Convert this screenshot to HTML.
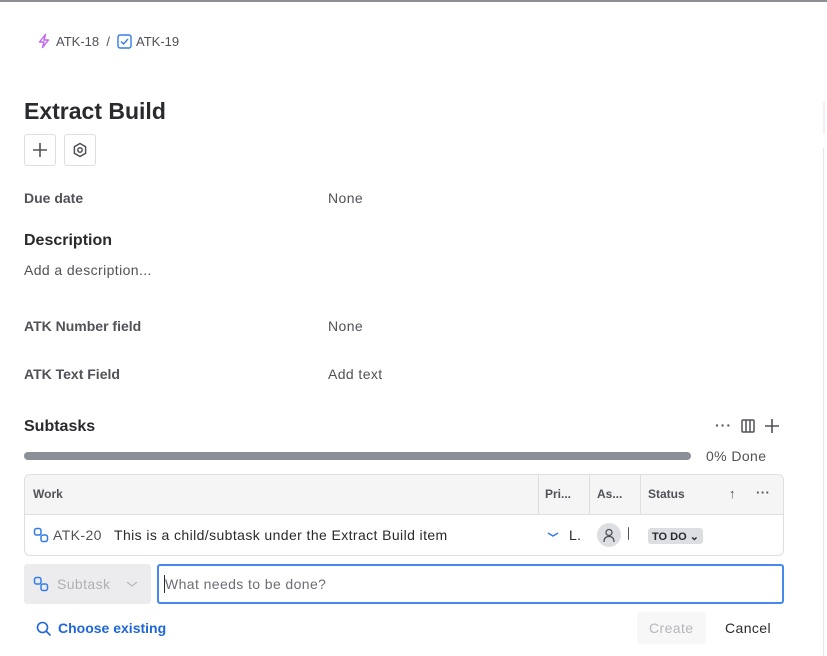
<!DOCTYPE html>
<html><head><meta charset="utf-8"><style>
*{box-sizing:border-box;margin:0;padding:0}
body{width:827px;height:656px;background:#fff;font-family:"Liberation Sans",sans-serif;color:#292a2e;position:relative;overflow:hidden;font-size:14px;letter-spacing:0.4px}
.a{position:absolute;white-space:nowrap}
.lbl{font-weight:bold;color:#505258;letter-spacing:0}
.val{color:#505258}
b,.bold{letter-spacing:0}
</style></head><body>
<div class="a" style="left:0;top:0;width:827px;height:2px;background:#8c8f95"></div>
<div class="a" style="left:823px;top:148px;width:1px;height:508px;background:#e6e7ea"></div>
<div class="a" style="left:823px;top:102px;width:2px;height:32px;background:#f0f1f2"></div>

<svg class="a" style="left:36px;top:33px" width="16" height="16" viewBox="0 0 16 16"><path d="M9.5 1.5L3.5 9h4.5l-1.5 5.5L12.5 7H8z" fill="none" stroke="#bf63f3" stroke-width="1.4" stroke-linejoin="round"/></svg>
<div class="a" style="left:56px;top:34px;font-size:13px;color:#505258;letter-spacing:0">ATK-18 &nbsp;/</div>
<svg class="a" style="left:117px;top:34px" width="15" height="15" viewBox="0 0 15 15"><rect x="1" y="1" width="13" height="13" rx="2" fill="none" stroke="#357de8" stroke-width="1.4"/><path d="M4 7.5l2.5 2.5L11 5" fill="none" stroke="#357de8" stroke-width="1.4"/></svg>
<div class="a" style="left:136px;top:34px;font-size:13px;color:#505258;letter-spacing:0">ATK-19</div>

<div class="a" style="left:24px;top:98px;font-size:23px;font-weight:bold;color:#292a2e;letter-spacing:0">Extract Build</div>
<div class="a" style="left:24px;top:134px;width:32px;height:32px;border:1px solid #dddee1;border-radius:3px"></div>
<svg class="a" style="left:31px;top:141px" width="18" height="18"><path d="M9 2v14M2 9h14" stroke="#505258" stroke-width="1.6"/></svg>
<div class="a" style="left:64px;top:134px;width:32px;height:32px;border:1px solid #dddee1;border-radius:3px"></div>
<svg class="a" style="left:71px;top:141px" width="18" height="18" viewBox="0 0 18 18"><path d="M9 2.5l5.6 3.2v6.6L9 15.5l-5.6-3.2V5.7z" fill="none" stroke="#505258" stroke-width="1.5"/><circle cx="9" cy="9" r="2.2" fill="none" stroke="#505258" stroke-width="1.5"/></svg>

<div class="a lbl" style="left:24px;top:190px">Due date</div>
<div class="a val" style="left:328px;top:190px">None</div>
<div class="a bold" style="left:24px;top:232px;font-size:16px;font-weight:bold">Description</div>
<div class="a val" style="left:24px;top:262px">Add a description...</div>
<div class="a lbl" style="left:24px;top:318px">ATK Number field</div>
<div class="a val" style="left:328px;top:318px">None</div>
<div class="a lbl" style="left:24px;top:366px">ATK Text Field</div>
<div class="a val" style="left:328px;top:366px">Add text</div>

<div class="a bold" style="left:24px;top:418px;font-size:16px;font-weight:bold">Subtasks</div>
<div class="a" style="left:715px;top:417px;font-size:14px;font-weight:bold;color:#505258;letter-spacing:1px">···</div>
<svg class="a" style="left:741px;top:419px" width="14" height="14"><rect x="1" y="1" width="12" height="12" rx="1" fill="none" stroke="#505258" stroke-width="1.5"/><path d="M5 1v12M9 1v12" stroke="#505258" stroke-width="1.5"/></svg>
<svg class="a" style="left:764px;top:418px" width="16" height="16"><path d="M8 1v14M1 8h14" stroke="#505258" stroke-width="1.6"/></svg>
<div class="a" style="left:24px;top:452px;width:667px;height:8px;border-radius:4px;background:#8c8f97"></div>
<div class="a val" style="left:706px;top:448px">0% Done</div>

<div class="a" style="left:24px;top:474px;width:760px;height:82px;border:1px solid #dddee1;border-radius:6px;overflow:hidden">
  <div style="position:absolute;left:0;top:0;width:760px;height:40px;background:#f5f5f6;border-bottom:1px solid #dddee1"></div>
  <div style="position:absolute;left:513px;top:0;width:1px;height:40px;background:#dddee1"></div>
  <div style="position:absolute;left:564px;top:0;width:1px;height:40px;background:#dddee1"></div>
  <div style="position:absolute;left:615px;top:0;width:1px;height:40px;background:#dddee1"></div>
</div>
<div class="a bold" style="left:33px;top:487px;font-size:12px;font-weight:bold;color:#505258">Work</div>
<div class="a bold" style="left:545px;top:487px;font-size:12px;font-weight:bold;color:#505258">Pri...</div>
<div class="a bold" style="left:597px;top:487px;font-size:12px;font-weight:bold;color:#505258">As...</div>
<div class="a bold" style="left:648px;top:487px;font-size:12px;font-weight:bold;color:#505258">Status</div>
<div class="a" style="left:729px;top:486px;font-size:13px;color:#505258">↑</div>
<div class="a" style="left:756px;top:485px;font-size:13px;font-weight:bold;color:#505258">···</div>

<svg class="a" style="left:33px;top:527px" width="16" height="16" viewBox="0 0 16 16"><rect x="1.5" y="1.5" width="6.5" height="6.5" rx="2" fill="none" stroke="#357de8" stroke-width="1.5"/><rect x="8" y="8" width="6.5" height="6.5" rx="2" fill="none" stroke="#357de8" stroke-width="1.5"/></svg>
<div class="a" style="left:53px;top:527px;color:#505258">ATK-20</div>
<div class="a" style="left:114px;top:527px">This is a child/subtask under the Extract Build item</div>
<svg class="a" style="left:547px;top:531px" width="12" height="8"><path d="M1 2l5 3 5-3" fill="none" stroke="#357de8" stroke-width="1.5"/></svg>
<div class="a" style="left:569px;top:527px">L.</div>
<div class="a" style="left:597px;top:523px;width:24px;height:24px;border-radius:50%;background:#dddee1"></div>
<svg class="a" style="left:601px;top:527px" width="16" height="16"><circle cx="8" cy="5.5" r="3" fill="none" stroke="#505258" stroke-width="1.3"/><path d="M3 15c0-4 2-5.5 5-5.5s5 1.5 5 5.5" fill="none" stroke="#505258" stroke-width="1.3"/></svg>
<div class="a" style="left:628px;top:527px;width:2px;height:13px;border-left:1.5px solid #505258;border-radius:2px"></div>
<div class="a" style="left:648px;top:528px;width:55px;height:16px;background:#dddee1;border-radius:3px"></div>
<div class="a bold" style="left:652px;top:530px;font-size:11px;font-weight:bold;color:#292a2e">TO DO ⌄</div>

<div class="a" style="left:24px;top:564px;width:127px;height:40px;background:#ececee;border-radius:3px"></div>
<svg class="a" style="left:33px;top:576px" width="16" height="16" viewBox="0 0 16 16"><rect x="1.5" y="1.5" width="6.5" height="6.5" rx="2" fill="none" stroke="#357de8" stroke-width="1.5"/><rect x="8" y="8" width="6.5" height="6.5" rx="2" fill="none" stroke="#357de8" stroke-width="1.5"/></svg>
<div class="a" style="left:57px;top:576px;color:#aeb0b5">Subtask</div>
<svg class="a" style="left:126px;top:580px" width="12" height="8"><path d="M1 2l5 4 5-4" fill="none" stroke="#b5b7bb" stroke-width="1.2"/></svg>
<div class="a" style="left:157px;top:564px;width:627px;height:40px;border:2px solid #4688ec;border-radius:3px"></div>
<div class="a" style="left:164px;top:575px;width:1px;height:18px;background:#292a2e"></div>
<div class="a" style="left:165px;top:576px;color:#6b6e76">What needs to be done?</div>

<svg class="a" style="left:36px;top:621px" width="16" height="16"><circle cx="6.5" cy="6.5" r="5" fill="none" stroke="#1f66d9" stroke-width="1.6"/><path d="M10 10l4.5 4.5" stroke="#1f66d9" stroke-width="1.6"/></svg>
<div class="a bold" style="left:58px;top:620px;font-weight:bold;color:#1f66d9">Choose existing</div>
<div class="a" style="left:637px;top:612px;width:69px;height:32px;background:#f7f7f8;border-radius:3px"></div>
<div class="a" style="left:649px;top:620px;color:#b5b7bb">Create</div>
<div class="a" style="left:725px;top:620px;color:#292a2e">Cancel</div>
</body></html>
